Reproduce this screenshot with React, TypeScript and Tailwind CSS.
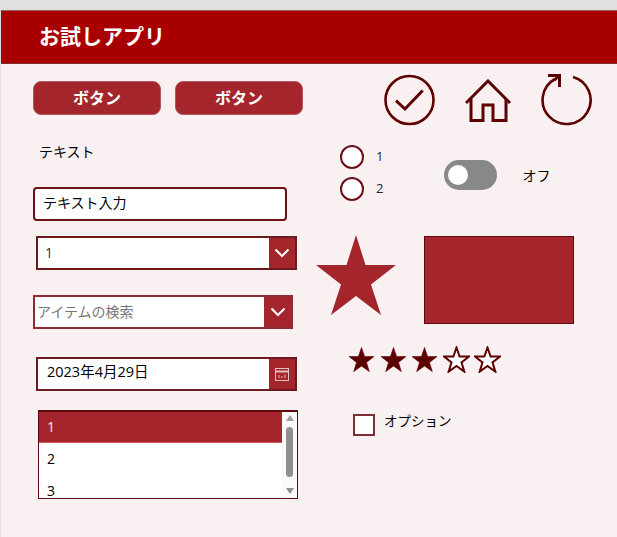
import React from 'react';

const font = { fontFamily: '"Open Sans", "Noto Sans CJK JP", sans-serif' };

const Chevron = () => (
  <svg width="16" height="10" viewBox="0 0 16 10" fill="none" stroke="#fff" strokeWidth="2">
    <path d="M1.5 1.5 L8 8 L14.5 1.5" />
  </svg>
);

const Star = ({ filled }: { filled: boolean }) => (
  <svg width="27" height="27" viewBox="0 0 27 27">
    <path
      d="M13.5 1.5 L16.6 10.6 L26 10.6 L18.5 16.4 L21.3 25.6 L13.5 20 L5.7 25.6 L8.5 16.4 L1 10.6 L10.4 10.6 Z"
      fill={filled ? '#5c0000' : '#fff'}
      stroke="#5c0000"
      strokeWidth={filled ? 0.6 : 2}
    />
  </svg>
);

const App: React.FC = () => {
  return (
    <div
      className="w-[617px] h-[537px] overflow-hidden bg-[#e0e0e0] pt-[10px] pl-[1px] text-[14px] text-black"
      style={font}
    >
      <div className="h-[527px] bg-[#f9f0f1]">
        <div className="h-[54px] bg-[#a80000] border-t border-t-[#a06060] border-b border-b-[#7c3030] pl-[38px] flex items-center text-[21px] font-semibold text-white">
          お試しアプリ
        </div>

        <div className="flex">
          {/* left column */}
          <div className="w-[315px] flex flex-col items-start">
            <div className="flex gap-[14px] mt-[17px] ml-[32px]">
              <button className="w-[128px] h-[34px] rounded-[8px] bg-[#a4262c] border border-[#b25a5e] text-white font-bold text-[16px]">
                ボタン
              </button>
              <button className="w-[128px] h-[34px] rounded-[8px] bg-[#a4262c] border border-[#b25a5e] text-white font-bold text-[16px]">
                ボタン
              </button>
            </div>

            <div className="mt-[26px] ml-[38px] h-[22px] leading-[22px]">テキスト</div>

            <div className="mt-[24px] ml-[32px] w-[254px] h-[34px] rounded-[4px] bg-white border-2 border-[#6b1015] pl-[8px] leading-[28px]">
              テキスト入力
            </div>

            <div className="mt-[15px] ml-[35px] w-[261px] h-[34px] flex bg-white border-2 border-[#6b1a1e]">
              <div className="flex-1 pl-[7px] leading-[30px] text-[#333]">1</div>
              <div className="w-[26px] bg-[#a4262c] flex items-center justify-center">
                <Chevron />
              </div>
            </div>

            <div className="mt-[25px] ml-[32px] w-[260px] h-[34px] flex bg-white border-2 border-[#8a2c30]">
              <div className="flex-1 pl-[2px] leading-[30px] text-[#777]">アイテムの検索</div>
              <div className="w-[27px] bg-[#a4262c] flex items-center justify-center">
                <Chevron />
              </div>
            </div>

            <div className="mt-[28px] ml-[35px] w-[261px] h-[34px] flex bg-white border-2 border-[#6b1a1e]">
              <div className="flex-1 pl-[9px] leading-[26px] text-[14.5px]">2023年4月29日</div>
              <div className="w-[26px] bg-[#a4262c] flex items-center justify-center">
                <svg width="14" height="13" viewBox="0 0 14 13" fill="none" stroke="#e2bfc1" strokeWidth="1">
                  <rect x="0.5" y="0.5" width="13" height="12" />
                  <path d="M0.5 3.5 H13.5" strokeWidth="2" />
                  <path d="M4 7 V10 M7 8 V10 M10 6.5 V10" />
                </svg>
              </div>
            </div>

            <div className="mt-[19px] ml-[37px] w-[260px] h-[89px] relative overflow-hidden bg-white border border-[#5c0a10] border-t-2">
              <div className="w-[244px] h-[31px] bg-[#a4262c] border-b border-b-[#d0585e] pl-[8px] leading-[30px] text-[#f6e6ee]">1</div>
              <div className="w-[244px] h-[32px] pl-[8px] leading-[32px]">2</div>
              <div className="w-[244px] h-[32px] pl-[8px] leading-[32px]">3</div>
              <div className="absolute right-0 top-0 w-[15px] h-full bg-[#fafafa] flex flex-col items-center">
                <div className="mt-[3px] w-0 h-0 border-x-[4px] border-x-transparent border-b-[6px] border-b-[#a0a0a0]" />
                <div className="mt-[6px] w-[7px] h-[50px] rounded-full bg-[#8f8f8f]" />
                <div className="mt-[11px] w-0 h-0 border-x-[4px] border-x-transparent border-t-[6px] border-t-[#8f8f8f]" />
              </div>
            </div>
          </div>

          {/* right column */}
          <div className="flex-1 relative">
            <div className="flex items-start mt-[10px] ml-[68px] h-[53px]">
              <svg width="52" height="52" viewBox="0 0 52 52" fill="none" stroke="#5c0000" strokeWidth="2.6">
                <circle cx="25.5" cy="26" r="24" />
                <path d="M12 26.7 L21 35 L38.7 16.5" strokeWidth="3" />
              </svg>
              <svg className="ml-[29px] mt-[5px]" width="48" height="44" viewBox="0 0 48 44" fill="none" stroke="#5c0000" strokeWidth="3">
                <path d="M1 24 L23 2 L45 24" />
                <path d="M6 20 V41.5 H18 V26 H28 V41.5 H41 V20" />
              </svg>
              <svg className="ml-[28px]" width="53" height="53" viewBox="0 0 53 53" fill="none" stroke="#5c0000" strokeWidth="2.6">
                <path d="M32 2.9 A 24 24 0 1 1 14 5" />
                <path d="M7 1.5 H18.5 V13" strokeWidth="3" />
                <path d="M18 2 L13.5 6" />
              </svg>
            </div>

            <div className="flex mt-[17px] ml-[24px]">
              <div className="flex flex-col gap-[7px]">
                <div className="flex items-center h-[25px]">
                  <span className="w-[24px] h-[24px] rounded-full bg-white border-2 border-[#6b1015]" />
                  <span className="ml-[12px] text-[13px] text-[#222]">1</span>
                </div>
                <div className="flex items-center h-[25px]">
                  <span className="w-[24px] h-[24px] rounded-full bg-white border-2 border-[#6b1015]" />
                  <span className="ml-[12px] text-[13px] text-[#222]">2</span>
                </div>
              </div>
              <div className="flex items-center ml-[61px] mt-[16px] h-[30px]">
                <div className="w-[53px] h-[30px] rounded-full bg-[#87888a] flex items-center pl-[4px]">
                  <span className="w-[20px] h-[20px] rounded-full bg-white" />
                </div>
                <span className="ml-[25px] text-[14px]">オフ</span>
              </div>
            </div>

            <div className="flex mt-[34px]">
              <svg width="80" height="80" viewBox="0 0 80 80">
                <path d="M40 0 L49.5 30 L80 30 L55 49.5 L65 80 L40 61 L15 80 L25 49.5 L0 30 L30.5 30 Z" fill="#a4262c" />
              </svg>
              <div className="ml-[28px] mt-[1px] w-[150px] h-[88px] bg-[#a4262c] border border-[#5c0a10]" />
            </div>

            <div className="flex gap-[4.5px] mt-[22px] ml-[32px]">
              <Star filled />
              <Star filled />
              <Star filled />
              <Star filled={false} />
              <Star filled={false} />
            </div>

            <div className="flex items-start mt-[41px] ml-[37px]">
              <span className="w-[22px] h-[22px] bg-white border-2 border-[#7c3035]" />
              <span className="ml-[9px] text-[13.5px] leading-[14px]">オプション</span>
            </div>
          </div>
        </div>
      </div>
    </div>
  );
};

export default App;
